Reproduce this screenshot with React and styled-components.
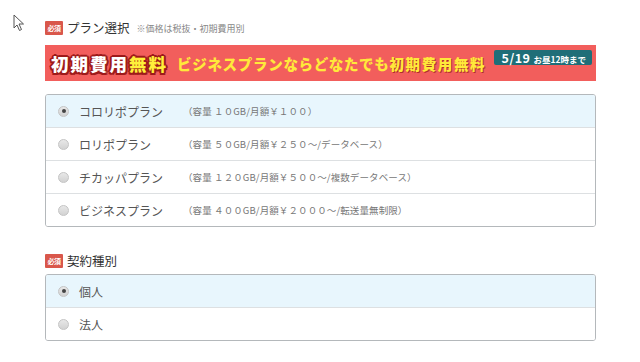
import React from 'react'
import styled, { createGlobalStyle } from 'styled-components'

const GlobalStyle = createGlobalStyle`
    body {
        margin: 0;
        background: #ffffff;
        font-family: 'Noto Sans CJK JP', 'Noto Sans', sans-serif;
        color: #333;
    }
`;

const Page = styled.div`
    position: relative;
    width: 640px;
    height: 362px;
    overflow: hidden;
    padding: 21px 0 0 45px;
    box-sizing: border-box;
`;

const Cursor = styled.svg`
    position: absolute;
    left: 13px;
    top: 14px;
`;

const Section = styled.section`
    width: 551px;
    margin-bottom: ${p => p.$gap || 0}px;
`;

const Heading = styled.div`
    display: flex;
    align-items: center;
    height: 14px;
    margin-bottom: ${p => p.$gap}px;
`;

const Required = styled.span`
    display: inline-flex;
    align-items: center;
    justify-content: center;
    width: 18px;
    height: 14px;
    background: #d9574b;
    color: #fff;
    font-size: 7px;
    font-weight: 700;
    border-radius: 1px;
    margin-right: 4px;
    letter-spacing: -0.5px;
`;

const Title = styled.span`
    font-size: 12.5px;
    color: #333;
    line-height: 14px;
`;

const Note = styled.span`
    font-size: 9px;
    color: #888;
    margin-left: 7px;
    margin-top: 1px;
`;

const Banner = styled.div`
    display: flex;
    align-items: center;
    height: 36px;
    background: #f25e5c;
    padding-left: 6px;
    margin-bottom: 13px;
    font-weight: 900;
    white-space: nowrap;
`;

const BigFree = styled.span`
    font-size: 17.5px;
    letter-spacing: 2px;
    color: ${p => p.$yellow ? '#ffef3a' : '#ffffff'};
    text-shadow:
        2px 0 0 #9e1a1a, -2px 0 0 #9e1a1a, 0 2px 0 #9e1a1a, 0 -2px 0 #9e1a1a,
        1.5px 1.5px 0 #9e1a1a, -1.5px -1.5px 0 #9e1a1a, 1.5px -1.5px 0 #9e1a1a, -1.5px 1.5px 0 #9e1a1a;
`;

const Message = styled.span`
    font-size: 14.5px;
    color: #ffe93a;
    margin-left: 9px;
    letter-spacing: 0.7px;
`;

const MessageFree = styled.span`
    font-size: 14.5px;
    color: #ffe93a;
    letter-spacing: 1.6px;
    text-shadow: 1px 1px 0 #b0302a;
`;

const Deadline = styled.span`
    align-self: flex-start;
    margin: 5px 4px 0 auto;
    display: inline-flex;
    align-items: baseline;
    gap: 3px;
    height: 15px;
    padding: 0 6px 0 8px;
    line-height: 15px;
    background: #1f6e78;
    color: #fff;
    border-radius: 2px;
    font-weight: 700;
`;

const DeadlineDate = styled.span`
    font-size: 12.5px;
    letter-spacing: 0.5px;
`;

const DeadlineTime = styled.span`
    font-size: 8.5px;
`;

const OptionList = styled.div`
    border: 1px solid #b4b8bb;
    border-radius: 3px;
    overflow: hidden;
`;

const Option = styled.label`
    display: flex;
    align-items: center;
    height: 32px;
    padding-left: 12px;
    background: ${p => p.$active ? '#e8f6fd' : '#fff'};
    & + & {
        border-top: 1px solid #dde0e2;
    }
`;

const Radio = styled.span`
    position: relative;
    width: 9px;
    height: 9px;
    border-radius: 50%;
    border: 1px solid #c4c4c4;
    background: linear-gradient(#e8e8e8, #d2d2d2);
    margin-right: 10px;
    flex-shrink: 0;
    &::after {
        content: '';
        display: ${p => p.$checked ? 'block' : 'none'};
        position: absolute;
        left: 2.5px;
        top: 2.5px;
        width: 4px;
        height: 4px;
        border-radius: 50%;
        background: #444;
    }
`;

const OptionName = styled.span`
    width: 104px;
    font-size: 12px;
    color: #555;
`;

const OptionDetail = styled.span`
    font-size: 9.5px;
    color: #777;
    letter-spacing: 0.1px;
`;

const plans = [
    { name: 'コロリポプラン', detail: '（容量 １０GB/月額￥１００）' },
    { name: 'ロリポプラン', detail: '（容量 ５０GB/月額￥２５０～/データベース）' },
    { name: 'チカッパプラン', detail: '（容量 １２０GB/月額￥５００～/複数データベース）' },
    { name: 'ビジネスプラン', detail: '（容量 ４００GB/月額￥２０００～/転送量無制限）' },
];

const contracts = ['個人', '法人'];

export default function App() {
    return (
        <>
            <GlobalStyle />
            <Page>
                <Cursor width="12" height="18" viewBox="0 0 12 18">
                    <path d="M1 1 L1 14 L4 11 L6.5 16.5 L8.5 15.5 L6 10 L10.5 10 Z" fill="#fff" stroke="#555" strokeWidth="1" strokeLinejoin="round" />
                </Cursor>

                <Section $gap={27}>
                    <Heading $gap={10}>
                        <Required>必須</Required>
                        <Title>プラン選択</Title>
                        <Note>※価格は税抜・初期費用別</Note>
                    </Heading>
                    <Banner>
                        <BigFree>初期費用</BigFree>
                        <BigFree $yellow>無料</BigFree>
                        <Message>ビジネスプランならどなたでも</Message>
                        <MessageFree>初期費用無料</MessageFree>
                        <Deadline>
                            <DeadlineDate>5/19</DeadlineDate>
                            <DeadlineTime>お昼12時まで</DeadlineTime>
                        </Deadline>
                    </Banner>
                    <OptionList>
                        {plans.map((plan, i) => (
                            <Option key={plan.name} $active={i === 0}>
                                <Radio $checked={i === 0} />
                                <OptionName>{plan.name}</OptionName>
                                <OptionDetail>{plan.detail}</OptionDetail>
                            </Option>
                        ))}
                    </OptionList>
                </Section>

                <Section>
                    <Heading $gap={6}>
                        <Required>必須</Required>
                        <Title>契約種別</Title>
                    </Heading>
                    <OptionList>
                        {contracts.map((c, i) => (
                            <Option key={c} $active={i === 0}>
                                <Radio $checked={i === 0} />
                                <OptionName>{c}</OptionName>
                            </Option>
                        ))}
                    </OptionList>
                </Section>
            </Page>
        </>
    )
}
